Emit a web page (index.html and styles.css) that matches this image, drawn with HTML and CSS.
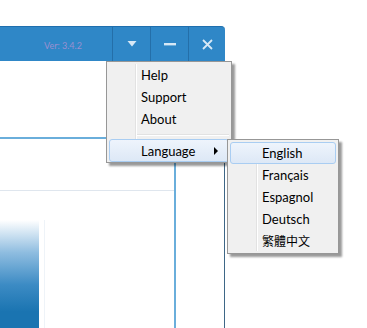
FILE: index.html
```html
<!DOCTYPE html>
<html lang="en">
<head>
  <meta charset="UTF-8">
  <title>App menu</title>
  <link rel="stylesheet" href="styles.css">
</head>
<body>
  <div class="window">
    <div class="titlebar">
      <span class="ver">Ver: 3.4.2</span>
      <button class="tb-btn">
        <svg width="10" height="6" viewBox="0 0 10 6"><path d="M0.5 0 H9.5 L5 5.5 Z" fill="#d7e8f6"/></svg>
      </button>
      <button class="tb-btn">
        <svg width="12" height="3" viewBox="0 0 12 3"><rect width="12" height="2.4" fill="#d7e8f6"/></svg>
      </button>
      <button class="tb-btn">
        <svg width="11" height="11" viewBox="0 0 11 11"><path d="M1 1 L10 10 M10 1 L1 10" stroke="#d7e8f6" stroke-width="1.8"/></svg>
      </button>
    </div>
    <div class="content">
      <div class="top-area"></div>
      <div class="row">
        <div class="panel">
          <div class="panel-head"></div>
          <div class="panel-body">
            <div class="grad"></div>
            <div class="grad-edge"></div>
          </div>
        </div>
      </div>
    </div>
  </div>

  <div class="menu main-menu">
    <div class="item">Help</div>
    <div class="item">Support</div>
    <div class="item">About</div>
    <div class="sep"></div>
    <div class="item active">Language <span class="arrow"></span></div>
  </div>

  <div class="menu sub-menu">
    <div class="item active">English</div>
    <div class="item">Français</div>
    <div class="item">Espagnol</div>
    <div class="item">Deutsch</div>
    <div class="item cjk">繁體中文</div>
  </div>
</body>
</html>
```

FILE: styles.css
```css
body {
  margin: 0;
  width: 367px;
  height: 328px;
  overflow: hidden;
  background: #fff;
  font-family: Lato, "Noto Sans", sans-serif;
  position: relative;
}
.window {
  margin-top: 26px;
  width: 225px;
  height: 302px;
  display: flex;
  flex-direction: column;
}
.titlebar {
  height: 34px;
  background: #2f87c7;
  border-top: 1px solid #1f6fae;
  border-top-right-radius: 4px;
  display: flex;
  align-items: stretch;
}
.ver {
  margin-left: 44px;
  margin-right: auto;
  align-self: center;
  font-size: 9px;
  color: #9a8fd0;
  margin-top: 2px;
}
.tb-btn {
  border: none;
  border-left: 1px solid #246fa9;
  background: transparent;
  width: 38px;
  padding: 0;
  display: flex;
  align-items: center;
  justify-content: center;
}
.tb-btn:last-child {
  width: 37px;
}
.content {
  flex: 1;
  border-right: 1px solid #3e6787;
  display: flex;
  flex-direction: column;
}
.top-area {
  height: 76px;
}
.row {
  flex: 1;
  display: flex;
}
.panel {
  width: 174px;
  border-top: 2px solid #6aaedb;
  border-right: 2px solid #6aaedb;
  display: flex;
  flex-direction: column;
}
.panel-head {
  height: 51px;
  border-bottom: 1px solid #dfe6ee;
}
.panel-body {
  flex: 1;
  display: flex;
  padding-top: 29px;
}
.grad {
  width: 39px;
  background: linear-gradient(#ffffff, #8fbde0 30%, #3c8bc4 60%, #1a74b1 85%);
}
.grad-edge {
  width: 1px;
  margin-left: 5px;
  background: #eef3f8;
}

.menu {
  position: absolute;
  background: #f0f0f0;
  border: 1px solid #979797;
  box-shadow: 3px 3px 2px rgba(0, 0, 0, 0.4);
  padding: 2px;
  box-sizing: border-box;
  font-size: 13px;
  color: #000;
}
.menu::before {
  content: "";
  position: absolute;
  top: 2px;
  bottom: 2px;
  left: 28px;
  width: 1px;
  background: #e2e2e2;
  border-right: 1px solid #fff;
}
.main-menu {
  left: 106px;
  top: 61px;
  width: 126px;
  height: 102px;
}
.sub-menu {
  left: 227px;
  top: 139px;
  width: 112px;
  height: 115px;
}
.item {
  position: relative;
  height: 22px;
  line-height: 22px;
  padding-left: 31px;
  box-sizing: border-box;
  border: 1px solid transparent;
  border-radius: 3px;
  display: flex;
  align-items: center;
}
.item.active {
  background: linear-gradient(#eef4fc, #dde8f6);
  border-color: #a9cdf2;
}
.main-menu .item.active {
  height: 23px;
}
.cjk {
  font-family: "Noto Sans CJK TC", sans-serif;
  font-size: 12px;
}
.sep {
  height: 9px;
  margin-left: 28px;
  position: relative;
}
.sep::after {
  content: "";
  position: absolute;
  left: 0;
  right: 0;
  top: 4px;
  height: 1px;
  background: #e2e2e2;
  border-bottom: 1px solid #fff;
}
.arrow {
  position: absolute;
  left: 104px;
  top: 7px;
  width: 0;
  height: 0;
  border-top: 4px solid transparent;
  border-bottom: 4px solid transparent;
  border-left: 4px solid #000;
}
```
